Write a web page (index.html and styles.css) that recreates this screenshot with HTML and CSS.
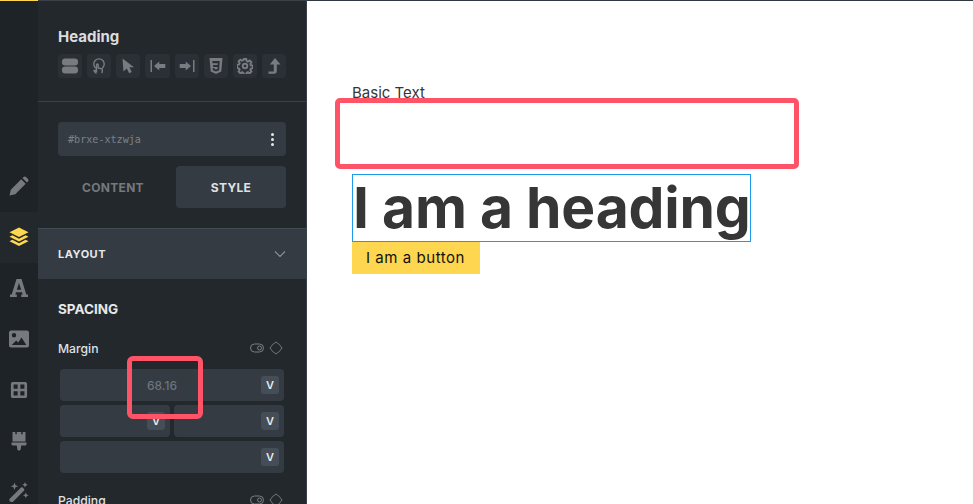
FILE: index.html
```html
<!DOCTYPE html>
<html lang="en">
<head>
<meta charset="utf-8">
<title>Heading</title>
<link rel="stylesheet" href="styles.css">
</head>
<body>
<div class="app">
  <nav class="rail">
    <div class="rail-item"><svg class="rail-icon" viewBox="0 0 20 20"><path d="M0.500 19.500l1.300-5.800L12.200 3.300l4.500 4.500L6.300 18.200z"/><path d="M13.400 2.100l.9-.9c.9-.9 2.100-.9 2.900 0l1.600 1.600c.9.800.9 2 0 2.900l-.9.900z"/></svg></div>
    <div class="rail-item is-active"><svg class="rail-icon" viewBox="0 0 20 20"><path d="M10 .5l9.500 4.800L10 10.100.5 5.300z"/><path d="M3.400 8.300L10 11.700l6.600-3.400 2.900 1.500L10 14.600.5 9.800z"/><path d="M3.400 12.800L10 16.200l6.600-3.400 2.900 1.500-9.500 4.800-9.500-4.800z"/></svg></div>
    <div class="rail-item"><svg class="rail-icon" viewBox="0 0 20 20"><path d="M7.500 1h5L17.300 16.500h1.700V19h-6.800v-2.500h1.500l-.7-2.300H7l-.7 2.300h1.500V19H1v-2.500h1.700zM10 5L7.800 11.700h4.400z" fill-rule="evenodd"/></svg></div>
    <div class="rail-item"><svg class="rail-icon" viewBox="0 0 20 20"><path fill-rule="evenodd" d="M2 1.500h16c1 0 2 1 2 2v13c0 1-1 2-2 2H2c-1 0-2-1-2-2v-13c0-1 1-2 2-2zM5 4a2.200 2.200 0 100 4.400A2.200 2.200 0 005 4zM2.800 16h14.500l-4.800-7.500-3.300 5-2-1.900z"/></svg></div>
    <div class="rail-item"><svg class="rail-icon rail-icon-small" viewBox="0 0 20 20"><path fill-rule="evenodd" d="M3 1h14c1 0 2 1 2 2v14c0 1-1 2-2 2H3c-1 0-2-1-2-2V3c0-1 1-2 2-2zm1 3v4.500h4.500V4zm7.500 0v4.500H16V4zM4 11.500V16h4.500v-4.500zm7.500 0V16H16v-4.500z"/></svg></div>
    <div class="rail-item"><svg class="rail-icon" viewBox="0 0 20 20"><path d="M3.500 1h2.800v2.200h1.500V1h4.400v2.200h1.500V1h2.800v9.500H3.500z"/><path d="M2.500 11.500h15V13c0 .9-.6 1.500-1.500 1.500h-3.800L11.700 18c-.2 1-.9 1.500-1.700 1.500S8.500 19 8.300 18l-.5-3.500H4c-.9 0-1.500-.6-1.500-1.500z"/></svg></div>
    <div class="rail-item"><svg class="rail-icon" viewBox="0 0 20 20"><path d="M.700 16.800L11.800 5.700c.6-.6 1.500-.6 2.100 0l1 1c.6.600.6 1.500 0 2.100L3.800 19.900c-.6.600-1.500.600-2.100 0l-1-1c-.6-.6-.6-1.500 0-2.100z"/><path d="M5.500.5l1 2.700L9.200 4.200 6.500 5.200l-1 2.700-1-2.700L1.800 4.200l2.700-1zM16 0l.9 1.900 1.900.9-1.900.9L16 5.600l-.9-1.900-1.900-.9 1.900-.9zM16.800 10.500l.9 1.900 1.900.9-1.900.9-.9 1.900-.9-1.900-1.900-.9 1.900-.9z"/></svg></div>
  </nav>

  <aside class="panel">
    <header class="panel-head">
      <h1 class="panel-title">Heading</h1>
      <div class="tool-row">
        <span class="tool"><svg viewBox="0 0 16 16"><rect x="0" y="0.500" width="16" height="7" rx="3.200"/><rect x="0" y="8.500" width="16" height="7" rx="3.200"/></svg></span>
        <span class="tool"><svg viewBox="0 0 16 16" class="line"><path d="M4.800 10.200A5.200 5.200 0 1 1 11.200 10.200"/><path d="M5.500 15.500l-2.300-2.300c-.5-.6.200-1.300.8-.9l1.500 1V6.800c0-1.100 1.700-1.100 1.700 0V10l3.200.7c.8.200 1.100.8 1 1.500l-.5 3"/></svg></span>
        <span class="tool"><svg viewBox="0 0 16 16"><path d="M2.500 .5l11.500 8.800H9.500l2.200 4.700-2.600 1.300-2.300-4.900-3.300 3.100z"/></svg></span>
        <span class="tool tool-wide"><svg viewBox="0 0 16 16"><rect x=".5" y="2" width="1.500" height="12"/><path d="M4 8L9.300 3.500V6h6v4h-6v2.500z"/></svg></span>
        <span class="tool"><svg viewBox="0 0 16 16"><rect x="14" y="2" width="1.500" height="12"/><path d="M12 8L6.700 3.500V6h-6v4h6v2.500z"/></svg></span>
        <span class="tool"><svg viewBox="0 0 16 16"><path fill-rule="evenodd" d="M1.500 0h13l-1.200 13.500L8 16l-5.300-2.500zM4.300 3l.2 2.200h5.300l-.2 1.900H5l.2 2h4.400l-.2 1.800-1.400.6-1.500-.6-.1-1H4.700l.2 2.400L8 13.500l3.100-1.200.6-9.300z"/></svg></span>
        <span class="tool"><svg viewBox="0 0 16 16" class="line gear"><circle cx="8" cy="8" r="2.300"/><path d="M6.800 1h2.400l.4 2 1.300.6 1.800-1.100 1.700 1.700-1.100 1.800.6 1.300 2 .4v2.400l-2 .4-.6 1.300 1.100 1.800-1.700 1.700-1.800-1.100-1.300.6-.4 2H6.800l-.4-2-1.300-.6-1.800 1.100-1.700-1.700 1.100-1.800-.6-1.300-2-.4V6.800l2-.4.6-1.300-1.100-1.800 1.700-1.700 1.800 1.100 1.300-.6z"/></svg></span>
        <span class="tool"><svg viewBox="0 0 16 16"><path d="M9 0l5.500 6.500h-3.700V13c0 1.700-.9 2.700-2.600 2.700H2.500v-2.200h5.300v-7H3.800z"/></svg></span>
      </div>
    </header>

    <div class="panel-body">
      <div class="id-field">
        <span class="id-text">#brxe-xtzwja</span>
        <span class="dots"><i></i><i></i><i></i></span>
      </div>
      <div class="tabs">
        <div class="tab">CONTENT</div>
        <div class="tab is-active">STYLE</div>
      </div>
    </div>

    <div class="group-row">
      <span class="group-label">LAYOUT</span>
      <svg class="chevron" viewBox="0 0 12 8"><path d="M1 1.500l5 5 5-5"/></svg>
    </div>

    <section class="spacing">
      <h2 class="spacing-title">SPACING</h2>

      <div class="control-head">
        <span class="control-label">Margin</span>
        <span class="control-icons">
          <svg class="mini" viewBox="0 0 14 10"><rect x=".5" y="1" width="13" height="8" rx="4"/><circle cx="9.500" cy="5" r="2"/></svg>
          <svg class="mini" viewBox="0 0 14 14"><path d="M7 .8l1.600 1.700c1.500.4 2.500 1.400 2.900 2.900L13.200 7l-1.700 1.600c-.4 1.500-1.400 2.500-2.900 2.900L7 13.200l-1.600-1.700c-1.500-.4-2.500-1.400-2.900-2.900L.8 7l1.700-1.600c.4-1.500 1.400-2.500 2.900-2.900z"/></svg>
        </span>
      </div>

      <div class="box-grid">
        <div class="box box-full"><span class="box-value">68.16</span><span class="unit">V</span></div>
        <div class="box"><span class="unit">V</span></div>
        <div class="box"><span class="unit">V</span></div>
        <div class="box box-full"><span class="unit">V</span></div>
      </div>

      <div class="control-head control-head-next">
        <span class="control-label">Padding</span>
        <span class="control-icons">
          <svg class="mini" viewBox="0 0 14 10"><rect x=".5" y="1" width="13" height="8" rx="4"/><circle cx="9.500" cy="5" r="2"/></svg>
          <svg class="mini" viewBox="0 0 14 14"><path d="M7 .8l1.600 1.700c1.500.4 2.500 1.400 2.900 2.900L13.200 7l-1.700 1.600c-.4 1.500-1.400 2.500-2.900 2.900L7 13.200l-1.600-1.700c-1.500-.4-2.500-1.400-2.900-2.900L.8 7l1.700-1.600c.4-1.500 1.400-2.500 2.900-2.900z"/></svg>
        </span>
      </div>
    </section>
  </aside>

  <main class="canvas">
    <p class="basic-text">Basic Text</p>
    <h2 class="page-heading">I am a heading</h2>
    <a class="page-button">I am a button</a>
  </main>

  <div class="note note-wide"></div>
  <div class="note note-small"></div>
</div>
</body>
</html>
```
FILE: styles.css
```css
* { box-sizing: border-box; }
html, body { margin: 0; height: 100%; overflow: hidden; background: #fff; }
body { font-family: Inter, "Liberation Sans", sans-serif; }

.app { position: relative; display: flex; width: 973px; height: 504px; overflow: hidden; }

.rail { width: 38px; flex: none; background: #1e2327; border-top: 1px solid #ffd64f; padding-top: 160px; overflow: hidden; }
.rail-item { height: 51px; display: flex; align-items: center; justify-content: center; flex: none; padding: 0 1px 2px 0; }
.rail-item.is-active { background: #23282d; }
.rail-icon { width: 20px; height: 20px; fill: #767a7d; }
.rail-icon-small { width: 18px; height: 18px; }
.is-active .rail-icon { fill: #ffd64f; }

.panel { width: 269px; flex: none; background: #23282d; border-top: 1px solid #3a4149; border-right: 1px solid #3a4149; overflow: hidden; color: #fff; }
.panel-head { padding: 27px 20px 0; height: 101px; border-bottom: 1px solid #3a4149; }
.panel-title { margin: 0 0 8px; font-size: 15px; line-height: 18px; font-weight: 700; color: #dcdddf; }
.tool-row { display: flex; gap: 5px; }
.tool { width: 24px; height: 24px; background: #2b3036; border-radius: 4px; display: flex; align-items: center; justify-content: center; }
.tool-wide { width: 25px; }
.tool svg { width: 16px; height: 16px; fill: #787c80; }
.tool svg.line { fill: none; stroke: #787c80; stroke-width: 1.400; }
.tool svg.gear { stroke-width: 1.900; }

.panel-body { padding: 20px 20px; }
.id-field { height: 34px; background: #343b43; border-radius: 4px; display: flex; align-items: center; justify-content: space-between; padding: 0 12px 0 10px; }
.id-text { font-family: "DejaVu Sans Mono", monospace; font-size: 10.100px; color: #7d8287; }
.dots { display: flex; flex-direction: column; gap: 2px; }
.dots i { width: 3px; height: 3px; border-radius: 50%; background: #e6e7e8; }
.tabs { display: grid; grid-template-columns: 110px 110px; justify-content: space-between; height: 42px; margin-top: 10px; }
.tab { display: flex; align-items: center; justify-content: center; font-size: 12px; font-weight: 700; letter-spacing: .3px; color: #75797d; border-radius: 4px; }
.tab.is-active { background: #343b43; color: #dfe1e3; }

.group-row { height: 51px; background: #343b43; border-top: 1px solid #424a53; display: flex; align-items: center; justify-content: space-between; padding: 0 20px; }
.group-label { font-size: 11px; font-weight: 700; letter-spacing: .5px; color: #e6e8ea; }
.chevron { width: 12px; height: 8px; fill: none; stroke: #8d9196; stroke-width: 1.100; }

.spacing { padding: 21px 20px 0; }
.spacing-title { margin: 0; font-size: 13.500px; line-height: 18px; font-weight: 700; color: #e6e8ea; }
.control-head { display: flex; align-items: center; justify-content: space-between; margin-top: 21px; height: 18px; padding-right: 3px; }
.control-head-next { margin-top: 18px; }
.control-label { font-size: 12.200px; font-weight: 500; color: #dfe1e3; }
.control-icons { display: flex; align-items: center; gap: 5px; }
.mini { width: 14px; height: 14px; fill: none; stroke: #7a7e83; stroke-width: 1; }

.box-grid { display: grid; grid-template-columns: 110px 110px; gap: 4px; margin: 12px 2px 0; }
.box { position: relative; height: 32px; background: #343b43; border-radius: 4px; display: flex; align-items: center; justify-content: flex-end; padding-right: 5px; }
.box-full { grid-column: 1 / 3; }
.box-value { position: absolute; left: 87px; font-size: 12px; font-weight: 500; color: #6e747a; }
.unit { width: 18px; height: 18px; border-radius: 3px; background: #454d57; color: #e6e8ea; font-size: 11px; font-weight: 600; display: flex; align-items: center; justify-content: center; }

.canvas { flex: 1; background: #fff; border-top: 1px solid #2f3a44; padding: 81px 0 0 45px; display: flex; flex-direction: column; align-items: flex-start; }
.basic-text { margin: 0; font-size: 15px; line-height: 22px; color: #363636; }
.page-heading { margin: 70px 0 0; font-size: 57px; line-height: 66px; letter-spacing: -.23px; font-weight: 700; color: #363636; border: 1px solid #1e9be8; }
.page-button { display: block; height: 32px; background: #ffd64f; color: #111; padding: 0 15px 0 14px; font-size: 15px; line-height: 32px; letter-spacing: .55px; }

.note { position: absolute; border: 5px solid #ff5468; pointer-events: none; }
.note-wide { left: 335px; top: 98px; width: 464px; height: 71px; border-radius: 5px; }
.note-small { left: 127px; top: 356px; width: 76px; height: 63px; border-radius: 6px; }
```
